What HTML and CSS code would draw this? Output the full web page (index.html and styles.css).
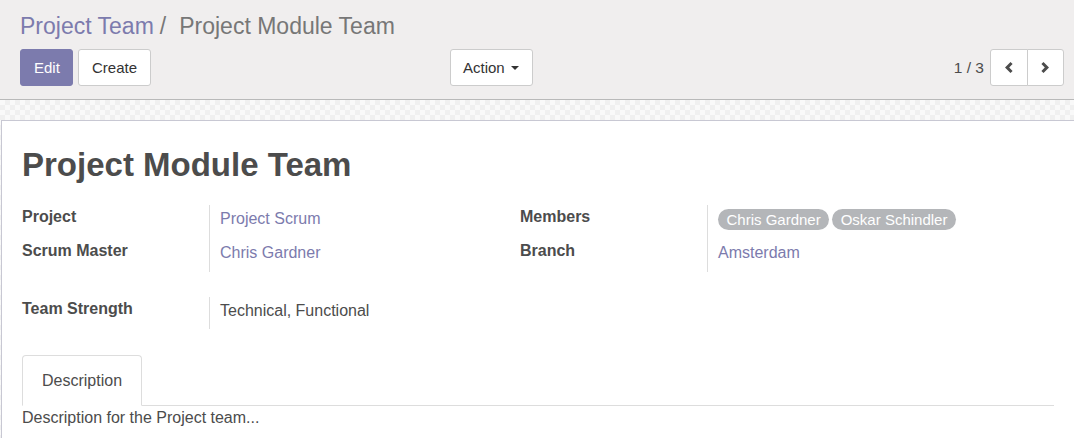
FILE: index.html
```html
<!DOCTYPE html>
<html lang="en">
<head>
<meta charset="utf-8">
<title>Project Module Team</title>
<link rel="stylesheet" href="styles.css">
</head>
<body>
<div class="control-panel">
  <ol class="breadcrumb">
    <li><a class="crumb-link" href="#">Project Team</a></li>
    <li class="crumb-sep">/</li>
    <li class="crumb-active">Project Module Team</li>
  </ol>
  <div class="cp-bottom">
    <div class="cp-left">
      <button class="btn btn-primary">Edit</button>
      <button class="btn">Create</button>
    </div>
    <div class="cp-sidebar">
      <button class="btn btn-action">Action <span class="caret"></span></button>
    </div>
    <div class="pager">
      <span class="pager-value">1 / 3</span>
      <div class="btn-group">
        <button class="btn btn-pager" aria-label="Previous"><svg width="8" height="11" viewBox="0 0 8 11"><polygon points="0,5.5 5.5,0 7.6,2.1 4.2,5.5 7.6,8.9 5.5,11" fill="#4c4c4c"/></svg></button>
        <button class="btn btn-pager" aria-label="Next"><svg width="8" height="11" viewBox="0 0 8 11"><polygon points="8,5.5 2.5,0 0.4,2.1 3.8,5.5 0.4,8.9 2.5,11" fill="#4c4c4c"/></svg></button>
      </div>
    </div>
  </div>
</div>
<div class="sheet-bg">
  <div class="sheet">
    <h1 class="title">Project Module Team</h1>
    <div class="groups">
      <div class="group">
        <div class="label">Project</div>
        <div class="value"><a class="link" href="#">Project Scrum</a></div>
        <div class="label">Scrum Master</div>
        <div class="value"><a class="link" href="#">Chris Gardner</a></div>
      </div>
      <div class="group">
        <div class="label">Members</div>
        <div class="value tags"><span class="tag">Chris Gardner</span><span class="tag">Oskar Schindler</span></div>
        <div class="label">Branch</div>
        <div class="value"><a class="link" href="#">Amsterdam</a></div>
      </div>
    </div>
    <div class="group group-single">
      <div class="label">Team Strength</div>
      <div class="value">Technical, Functional</div>
    </div>
    <ul class="tabs">
      <li class="tab active">Description</li>
    </ul>
    <div class="tab-pane">Description for the Project team...</div>
  </div>
</div>
</body>
</html>
```

FILE: styles.css
```css
html, body {
  margin: 0;
  padding: 0;
  width: 1074px;
  height: 438px;
  overflow: hidden;
  background: #ffffff;
}

body {
  font-family: "Liberation Sans", Arial, sans-serif;
  font-size: 16px;
  color: #4c4c4c;
}

a {
  text-decoration: none;
}

/* ---------- control panel ---------- */
.control-panel {
  background: #f0eeee;
  border-bottom: 1px solid #b9b9b9;
  padding: 14px 10px 13px 20px;
  height: 72px;
}

.breadcrumb {
  list-style: none;
  margin: 0;
  padding: 0;
  display: flex;
  align-items: baseline;
  font-size: 23px;
  line-height: 25px;
  height: 25px;
}

.crumb-link {
  color: #7c7bad;
}

.crumb-sep {
  color: #777777;
  margin: 0 13px 0 6px;
}

.crumb-active {
  color: #777777;
}

.cp-bottom {
  display: flex;
  align-items: center;
  margin-top: 10px;
  height: 37px;
}

.cp-left {
  flex: 0 0 430px;
  display: flex;
  gap: 5px;
}

.btn {
  box-sizing: border-box;
  height: 37px;
  padding: 0 13px;
  border: 1px solid #cccccc;
  border-radius: 3px;
  background: #ffffff;
  color: #333333;
  font-family: "Liberation Sans", Arial, sans-serif;
  font-size: 15px;
  display: inline-flex;
  align-items: center;
  cursor: pointer;
}

.btn-primary {
  width: 53px;
  background: #7c7bad;
  border-color: #7c7bad;
  color: #ffffff;
}

.btn-action {
  width: 83px;
  padding: 0 12px;
  gap: 6px;
}

.caret {
  display: inline-block;
  width: 0;
  height: 0;
  border-top: 4.5px solid #333333;
  border-left: 4.5px solid transparent;
  border-right: 4.5px solid transparent;
  margin-top: 1px;
}

.pager {
  margin-left: auto;
  display: flex;
  align-items: center;
  gap: 6px;
}

.pager-value {
  font-size: 15.5px;
  color: #4c4c4c;
}

.btn-group {
  display: flex;
}

.btn-pager {
  width: 37.5px;
  justify-content: center;
  padding: 0;
}

.btn-group .btn-pager:first-child {
  border-radius: 3px 0 0 3px;
}

.btn-group .btn-pager:last-child {
  border-radius: 0 3px 3px 0;
  margin-left: -1px;
}

/* ---------- sheet ---------- */
.sheet-bg {
  padding-top: 20px;
  background-color: #f6f6f6;
  background-image: conic-gradient(#f0f0f0 25%, #f9f9f9 0 50%, #f0f0f0 0 75%, #f9f9f9 0);
  background-size: 10px 10px;
  height: 318px;
}

.sheet {
  box-sizing: border-box;
  width: 1074px;
  margin-left: 1px;
  height: 330px;
  background: #ffffff;
  border: 1px solid #c8c8d3;
  padding: 26px 20px 0 20px;
}

.title {
  margin: 0 0 22px 0;
  font-size: 33px;
  line-height: 36px;
  font-weight: bold;
  color: #4c4c4c;
}

.groups {
  display: flex;
}

.group {
  flex: 0 0 498px;
  display: grid;
  grid-template-columns: 188px 1fr;
  grid-template-rows: 34px 33px;
}

.label {
  font-weight: bold;
  line-height: 22px;
  padding-top: 1px;
  border-right: 1px solid #dddddd;
}

.value {
  line-height: 22px;
  padding: 3px 0 0 10px;
}

.link {
  color: #7c7bad;
}

.tags {
  display: flex;
  gap: 3px;
  padding-top: 4px;
  align-items: flex-start;
}

.tag {
  background: #b4b6b9;
  color: #ffffff;
  font-size: 15px;
  line-height: 21px;
  padding: 0 8.5px;
  border-radius: 11px;
}

.group-single {
  margin-top: 25px;
  grid-template-rows: 32px;
}

/* ---------- tabs ---------- */
.tabs {
  list-style: none;
  margin: 26px 0 0 0;
  padding: 0;
  display: flex;
  border-bottom: 1px solid #dddddd;
}

.tab {
  line-height: 22px;
  padding: 13.5px 19px 13.5px 19px;
  border: 1px solid transparent;
  border-radius: 4px 4px 0 0;
  margin-bottom: -1px;
}

.tab.active {
  border-color: #dddddd;
  border-bottom-color: #ffffff;
  background: #ffffff;
}

.tab-pane {
  line-height: 22px;
  padding-top: 1px;
}
```
